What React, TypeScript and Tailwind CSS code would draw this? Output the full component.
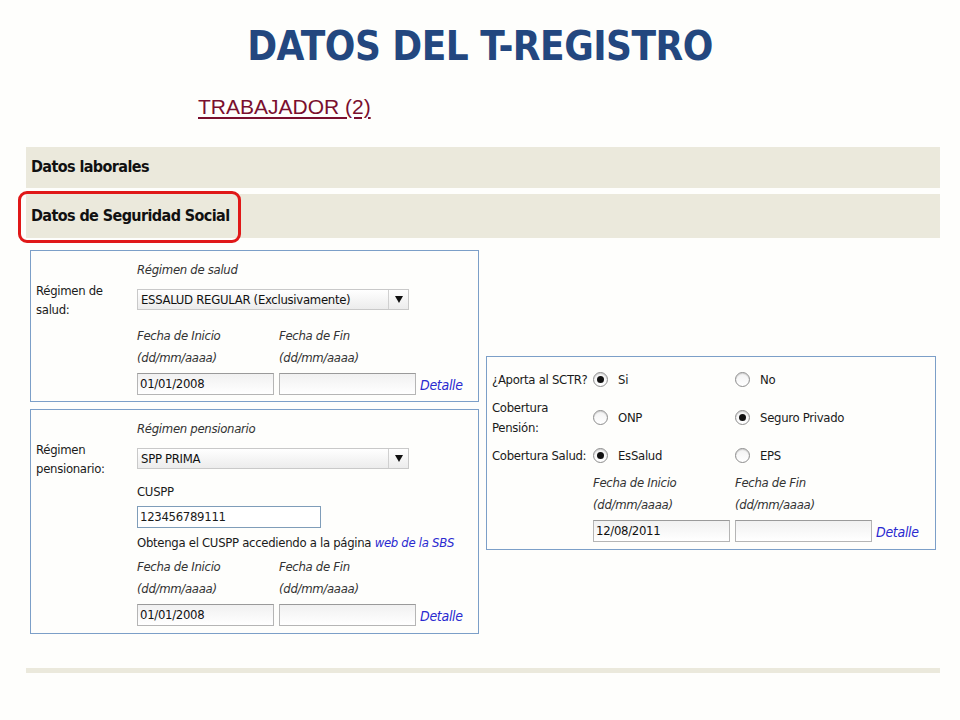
import React from 'react';

const narrow = { fontFamily: '"Liberation Sans Narrow", "DejaVu Sans Condensed", "Liberation Sans", sans-serif' };

const Radio: React.FC<{ checked?: boolean }> = ({ checked }) => (
  <span className="inline-flex h-[15px] w-[15px] shrink-0 items-center justify-center rounded-full border border-[#8d8d8d] bg-gradient-to-b from-[#f2f2f2] to-white shadow-[inset_0_1px_1px_rgba(0,0,0,0.15)]">
    {checked && <span className="h-[7px] w-[7px] rounded-full bg-[#111]" />}
  </span>
);

const Select: React.FC<{ value: string }> = ({ value }) => (
  <div className="flex h-[21px] w-[272px] items-stretch border border-[#c9c9c9] bg-gradient-to-b from-white to-[#ececec]">
    <span className="flex-1 truncate pl-[3px] leading-[19px] text-[#111]">{value}</span>
    <span className="flex w-[20px] items-center justify-center border-l border-[#d0d0d0]">
      <svg width="8" height="7" viewBox="0 0 8 7">
        <path d="M0 0h8L4 7z" fill="#111" />
      </svg>
    </span>
  </div>
);

const DateInput: React.FC<{ value?: string }> = ({ value }) => (
  <div className="h-[22px] w-[137px] border border-[#b5b5b5] border-t-[#9a9a9a] bg-gradient-to-b from-[#f1f1f1] to-white pl-[2px] leading-[20px] text-[#111]">
    {value}
  </div>
);

const Fechas: React.FC<{ inicio?: string }> = ({ inicio }) => (
  <div className="flex flex-col">
    <div className="flex italic text-[#333]">
      <div className="w-[142px] leading-[22px]">
        Fecha de Inicio
        <br />
        (dd/mm/aaaa)
      </div>
      <div className="leading-[22px]">
        Fecha de Fin
        <br />
        (dd/mm/aaaa)
      </div>
    </div>
    <div className="mt-[4px] flex items-end">
      <DateInput value={inicio} />
      <span className="ml-[5px]">
        <DateInput />
      </span>
      <span className="ml-[4px] text-[14px] italic leading-[20px] text-[#2a2ad0]">Detalle</span>
    </div>
  </div>
);

export default function App() {
  return (
    <div className="h-[720px] w-[960px] overflow-hidden bg-[#fefefc] text-[13px] tracking-[-0.3px] text-[#1a1a1a]" style={narrow}>
      <h1 className="pt-[24px] text-center text-[40px] font-bold leading-[44px] tracking-[-0.5px] text-[#23477f]">DATOS DEL T-REGISTRO</h1>

      <div className="mt-[27px] pl-[198px]">
        <span
          className="text-[21px] leading-[24px] tracking-normal text-[#7a0f2e] underline underline-offset-[3px]"
          style={{ fontFamily: '"Liberation Sans", sans-serif' }}
        >
          TRABAJADOR (2)
        </span>
      </div>

      <div className="ml-[26px] mt-[27px] w-[914px]">
        <div className="flex h-[41px] items-center bg-[#ebe9dc] pl-[5px] text-[16px] font-bold tracking-[-0.6px] text-[#111]">Datos laborales</div>
        <div className="relative mt-[6px] flex h-[44px] items-center bg-[#ebe9dc] pl-[5px] text-[16px] font-bold tracking-[-0.6px] text-[#111]">
          Datos de Seguridad Social
          <span className="absolute left-[-8px] top-[-3px] h-[52px] w-[223px] rounded-[9px] border-[3px] border-[#e01818]" />
        </div>

        <div className="mt-[12px] flex items-start pl-[4px]">
          {/* columna izquierda */}
          <div className="flex w-[449px] flex-col gap-[7px]">
            <div className="border border-[#7c9fc8] pb-[6px] pl-[5px] pt-[8px]">
              <div className="grid grid-cols-[101px_1fr] items-center">
                <div />
                <div className="italic leading-[22px] text-[#333]">Régimen de salud</div>
                <div className="leading-[19px]">
                  Régimen de
                  <br />
                  salud:
                </div>
                <Select value="ESSALUD REGULAR (Exclusivamente)" />
                <div />
                <div className="mt-[6px]">
                  <Fechas inicio="01/01/2008" />
                </div>
              </div>
            </div>

            <div className="border border-[#7c9fc8] pb-[7px] pl-[5px] pt-[8px]">
              <div className="grid grid-cols-[101px_1fr] items-center">
                <div />
                <div className="italic leading-[22px] text-[#333]">Régimen pensionario</div>
                <div className="leading-[19px]">
                  Régimen
                  <br />
                  pensionario:
                </div>
                <Select value="SPP PRIMA" />
                <div />
                <div className="flex flex-col">
                  <div className="mt-[3px] leading-[22px]">CUSPP</div>
                  <div className="mt-[3px] h-[22px] w-[184px] border border-[#7f9db9] bg-white pl-[2px] leading-[20px]">123456789111</div>
                  <div className="mt-[4px] whitespace-nowrap leading-[22px]">
                    Obtenga el CUSPP accediendo a la página <span className="italic text-[#2a2ad0]">web de la SBS</span>
                  </div>
                  <div className="mt-[2px]">
                    <Fechas inicio="01/01/2008" />
                  </div>
                </div>
              </div>
            </div>
          </div>

          {/* columna derecha */}
          <div className="ml-[7px] mt-[106px] w-[450px] border border-[#7c9fc8] pb-[7px] pl-[5px] pt-[12px]">
            <div className="grid grid-cols-[101px_142px_1fr] items-center gap-y-[7px]">
              <div className="whitespace-nowrap leading-[22px]">¿Aporta al SCTR?</div>
              <div className="flex items-center gap-[10px]">
                <Radio checked />
                <span>Si</span>
              </div>
              <div className="flex items-center gap-[10px]">
                <Radio />
                <span>No</span>
              </div>

              <div className="leading-[20px]">
                Cobertura
                <br />
                Pensión:
              </div>
              <div className="flex items-center gap-[10px]">
                <Radio />
                <span>ONP</span>
              </div>
              <div className="flex items-center gap-[10px]">
                <Radio checked />
                <span>Seguro Privado</span>
              </div>

              <div className="whitespace-nowrap leading-[22px]">Cobertura Salud:</div>
              <div className="flex items-center gap-[10px]">
                <Radio checked />
                <span>EsSalud</span>
              </div>
              <div className="flex items-center gap-[10px]">
                <Radio />
                <span>EPS</span>
              </div>

              <div />
              <div className="col-span-2 mt-[-2px]">
                <Fechas inicio="12/08/2011" />
              </div>
            </div>
          </div>
        </div>

        <div className="mt-[34px] h-[5px] bg-[#ebe9dc]" />
      </div>
    </div>
  );
}
